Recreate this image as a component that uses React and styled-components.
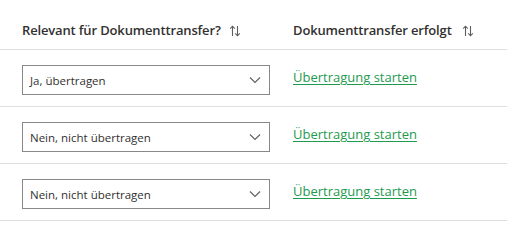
import React from "react";
import styled, { createGlobalStyle } from "styled-components";

const Global = createGlobalStyle`
  html, body { margin: 0; padding: 0; background: #ffffff; }
  body { font-family: "Open Sans", "Noto Sans", sans-serif; color: #323130; }
`;

const Table = styled.div`
  display: grid;
  grid-template-columns: 271px 1fr;
  width: 507px;
`;

const HeaderCell = styled.div`
  height: 50px;
  box-sizing: border-box;
  padding: 20px 0 0 ${(p) => p.$pad}px;
  border-bottom: 1px solid #e1dfdd;
  display: flex;
  align-items: flex-start;
  gap: ${(p) => p.$gap}px;
  font-size: 13px;
  font-weight: 600;
  letter-spacing: -0.15px;
  line-height: 20px;
  color: #323130;
  white-space: nowrap;
`;

const SortIcon = styled.svg`
  width: 12px;
  height: 12px;
  margin-top: 5px;
  flex: none;
`;

const Cell = styled.div`
  height: 57px;
  box-sizing: border-box;
  border-bottom: 1px solid #e1dfdd;
  padding: 15px 0 0 22px;
  display: flex;
  align-items: flex-start;
`;

const Select = styled.div`
  width: 248px;
  height: 30px;
  box-sizing: border-box;
  border: 1px solid #8a8886;
  padding: 0 8px 0 7px;
  display: flex;
  align-items: center;
  justify-content: space-between;
  font-size: 11.5px;
  color: #323130;
`;

const Chevron = styled.svg`
  width: 12px;
  height: 8px;
  flex: none;
`;

const Link = styled.a`
  font-size: 13px;
  line-height: 20px;
  margin-top: 2px;
  color: #1e9a4f;
  text-decoration: underline;
  text-underline-offset: 2px;
  cursor: pointer;
`;

const Sort = () => (
  <SortIcon viewBox="0 0 12 12">
    <path d="M3.5 11V1.2M1.2 3.6L3.5 1.2L5.8 3.6" fill="none" stroke="#605e5c" strokeWidth="1.1" />
    <path d="M8.5 1V10.8M6.2 8.4L8.5 10.8L10.8 8.4" fill="none" stroke="#605e5c" strokeWidth="1.1" />
  </SortIcon>
);

const rows = ["Ja, übertragen", "Nein, nicht übertragen", "Nein, nicht übertragen"];

export default function App() {
  return (
    <>
      <Global />
      <Table>
        <HeaderCell $pad={22} $gap={8}>
          Relevant für Dokumenttransfer?
          <Sort />
        </HeaderCell>
        <HeaderCell $pad={22} $gap={10}>
          Dokumenttransfer erfolgt
          <Sort />
        </HeaderCell>
        {rows.map((r, i) => (
          <React.Fragment key={i}>
            <Cell>
              <Select>
                {r}
                <Chevron viewBox="0 0 12 8">
                  <path d="M1 1.5L6 6.5L11 1.5" fill="none" stroke="#605e5c" strokeWidth="1.1" />
                </Chevron>
              </Select>
            </Cell>
            <Cell>
              <Link>Übertragung starten</Link>
            </Cell>
          </React.Fragment>
        ))}
      </Table>
    </>
  );
}
